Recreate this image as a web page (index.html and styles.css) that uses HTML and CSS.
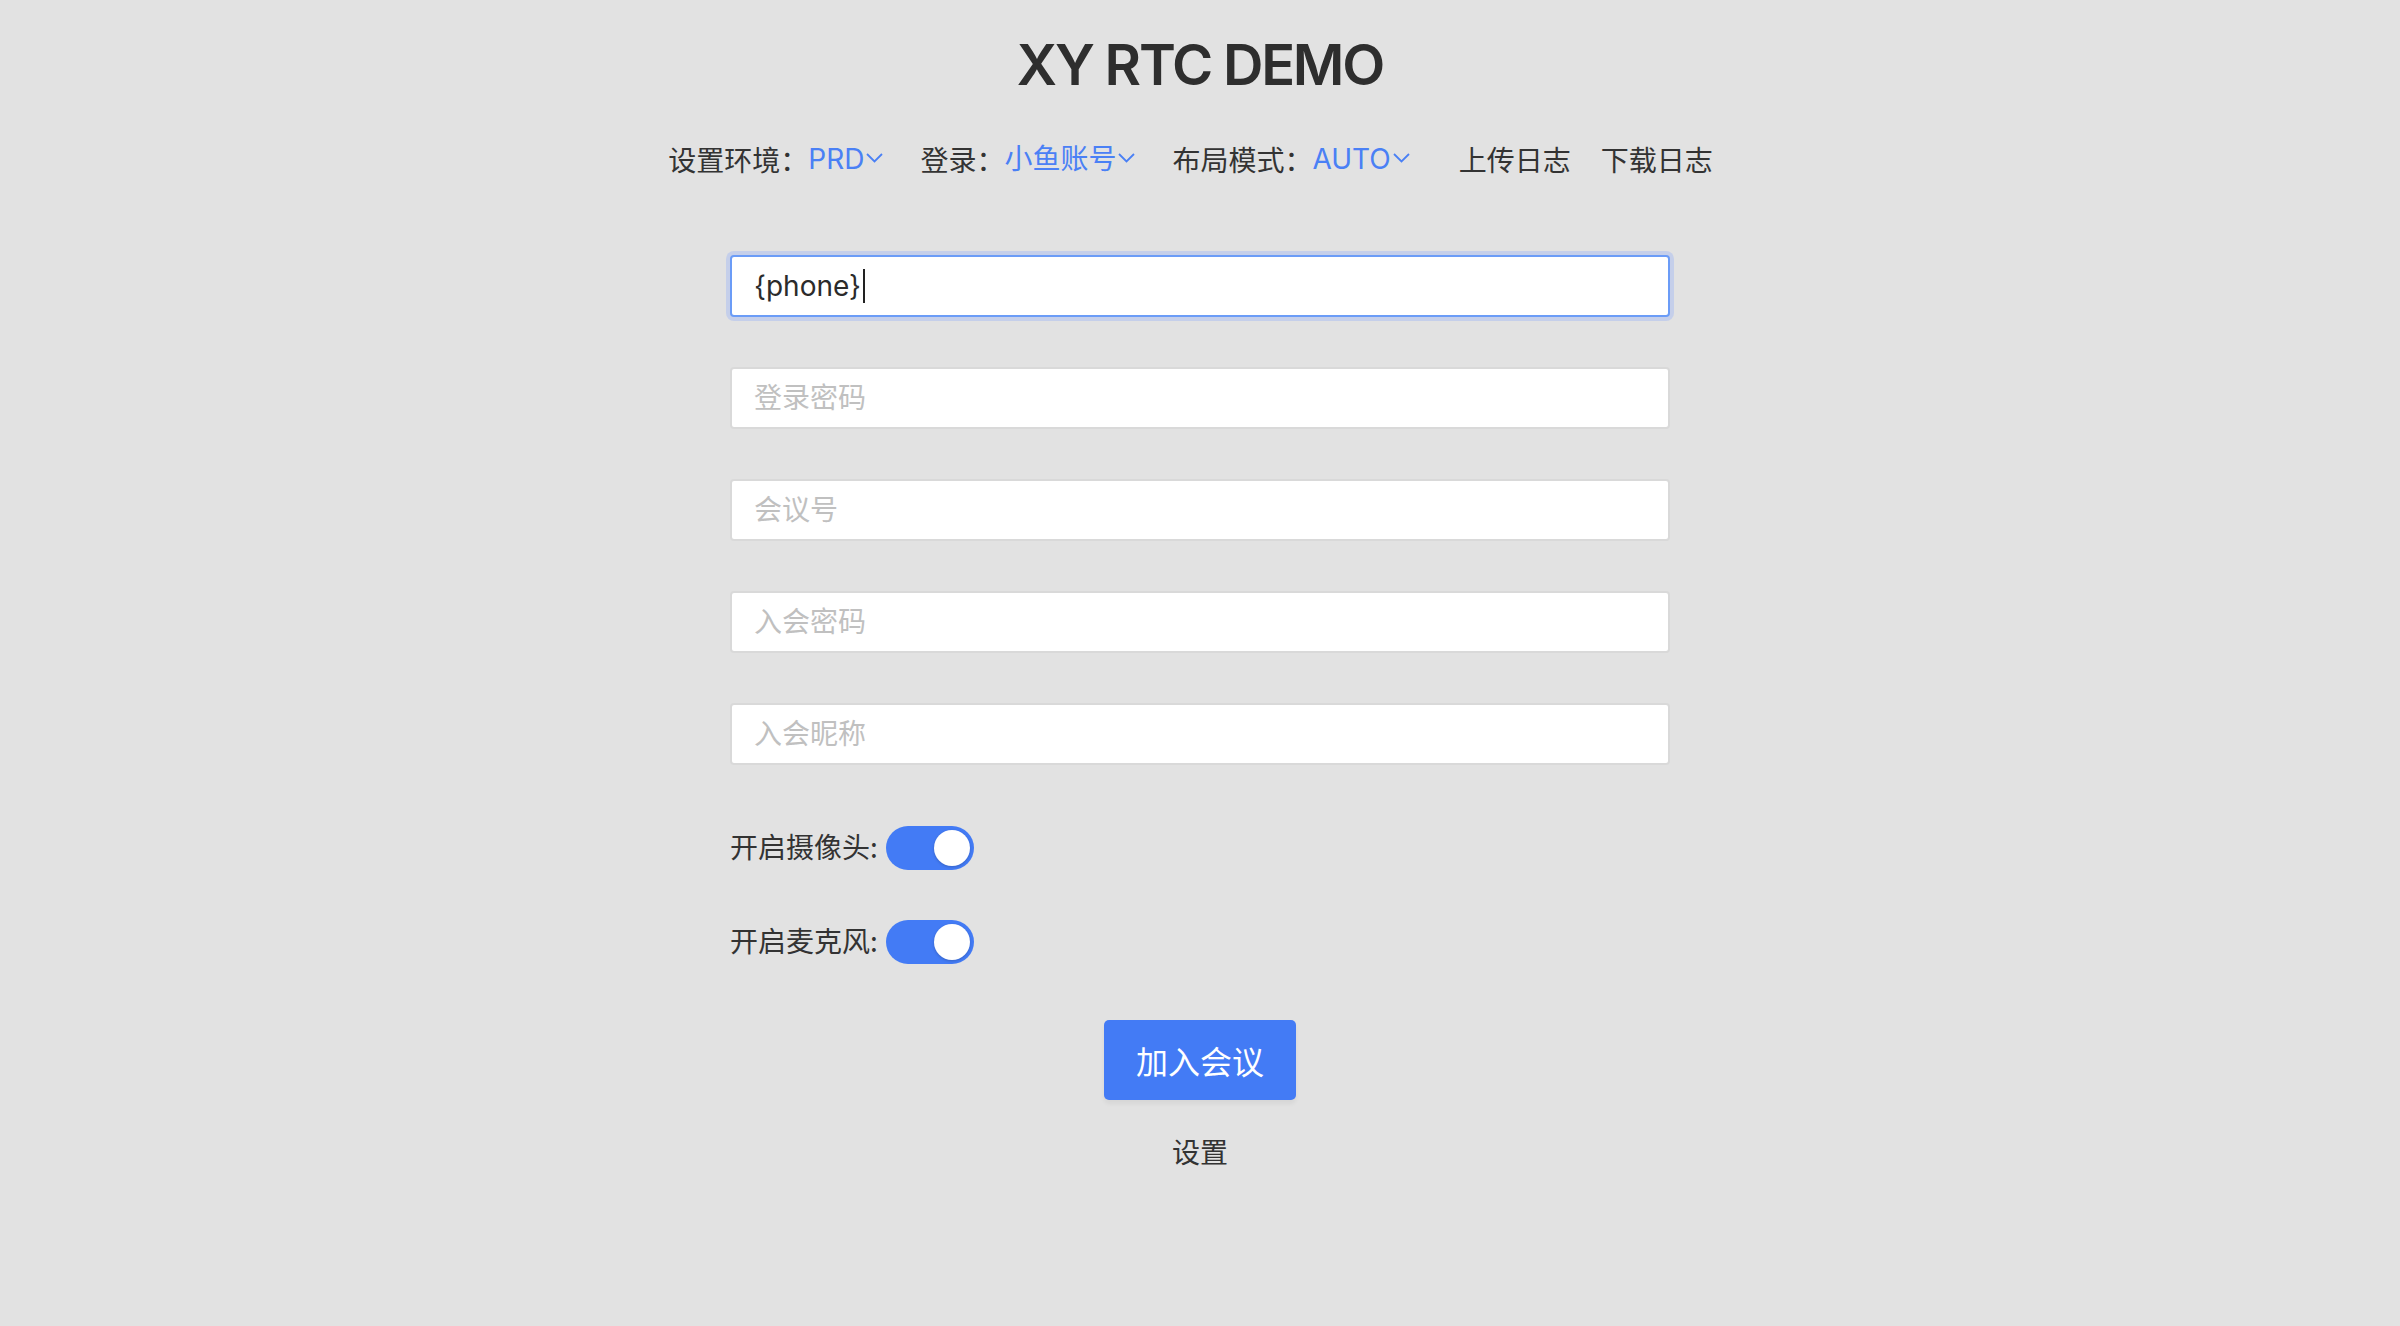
FILE: index.html
```html
<!DOCTYPE html>
<html lang="zh-CN">
<head>
<meta charset="utf-8">
<title>XY RTC DEMO</title>
<link rel="stylesheet" href="styles.css">
</head>
<body>
<div class="page">
  <h1 class="title">XY RTC DEMO</h1>
  <nav class="nav">
    <div class="nav-item">
      <span class="nav-label">设置环境：</span>
      <span class="nav-value">PRD<svg class="chev" width="17" height="10" viewBox="0 0 17 10"><polyline points="1,1 8.5,8.5 16,1" fill="none" stroke="currentColor" stroke-width="1.8"/></svg></span>
    </div>
    <div class="nav-item">
      <span class="nav-label">登录：</span>
      <span class="nav-value">小鱼账号<svg class="chev" width="17" height="10" viewBox="0 0 17 10"><polyline points="1,1 8.5,8.5 16,1" fill="none" stroke="currentColor" stroke-width="1.8"/></svg></span>
    </div>
    <div class="nav-item">
      <span class="nav-label">布局模式：</span>
      <span class="nav-value">AUTO<svg class="chev" width="17" height="10" viewBox="0 0 17 10"><polyline points="1,1 8.5,8.5 16,1" fill="none" stroke="currentColor" stroke-width="1.8"/></svg></span>
    </div>
    <span class="nav-link upload">上传日志</span>
    <span class="nav-link download">下载日志</span>
  </nav>

  <form class="form">
    <div class="field focused"><span class="field-text">{phone}</span><span class="caret"></span></div>
    <input class="field" type="password" placeholder="登录密码">
    <input class="field" type="text" placeholder="会议号">
    <input class="field" type="password" placeholder="入会密码">
    <input class="field field-last" type="text" placeholder="入会昵称">

    <div class="switch-row">
      <span class="switch-label">开启摄像头:</span>
      <span class="switch on"><span class="knob"></span></span>
    </div>
    <div class="switch-row">
      <span class="switch-label">开启麦克风:</span>
      <span class="switch on"><span class="knob"></span></span>
    </div>

    <button type="button" class="join">加入会议</button>
    <span class="settings">设置</span>
  </form>
</div>
</body>
</html>
```

FILE: styles.css
```css
html, body {
  margin: 0;
  padding: 0;
  background: #e2e2e2;
}
body {
  font-family: Inter, "Noto Sans CJK SC", sans-serif;
  color: #333333;
  min-height: 1326px;
}
.page {
  display: flex;
  flex-direction: column;
  align-items: center;
  padding-top: 37px;
}
.title {
  margin: 0;
  font-family: Inter, "Noto Sans CJK SC", sans-serif;
  font-weight: 600;
  font-size: 56px;
  line-height: 56px;
  letter-spacing: -2.2px;
  color: #2e2e2e;
}
.nav {
  display: flex;
  align-items: center;
  margin-top: 46px;
  height: 40px;
  font-size: 28px;
  line-height: 40px;
  padding-right: 19px;
}
.nav-item {
  display: flex;
  align-items: center;
  margin-right: 37px;
}
.nav-label {
  font-family: "Noto Sans CJK SC", sans-serif;
  color: #333333;
}
.nav-value {
  display: flex;
  align-items: center;
  color: #4a80f5;
  font-family: Inter, "Noto Sans CJK SC", sans-serif;
}
.chev {
  margin-left: 2px;
  margin-top: -2px;
}
.nav-link {
  font-family: "Noto Sans CJK SC", sans-serif;
  color: #333333;
}
.upload {
  margin-left: 12px;
}
.download {
  margin-left: 30px;
}
.form {
  display: flex;
  flex-direction: column;
  width: 940px;
  margin-top: 76px;
}
.field {
  box-sizing: border-box;
  width: 940px;
  height: 62px;
  margin: 0 0 50px 0;
  padding: 0 22px;
  border: 2px solid #d9d9d9;
  border-radius: 4px;
  background: #ffffff;
  font-family: Inter, "Noto Sans CJK SC", sans-serif;
  font-size: 28px;
  color: #333333;
  outline: none;
  display: flex;
  align-items: center;
}
.field::placeholder {
  color: #c0c0c0;
  font-family: "Noto Sans CJK SC", sans-serif;
}
.field.focused {
  border-color: #6b9cf7;
  box-shadow: 0 0 0 4px #c5cfea;
}
.field-text {
  color: #2b2b2b;
}
.caret {
  display: inline-block;
  width: 2px;
  height: 34px;
  background: #222222;
  margin-left: 2px;
}
.field-last {
  margin-bottom: 61px;
}
.switch-row {
  display: flex;
  align-items: center;
  height: 44px;
  margin-bottom: 50px;
}
.switch-label {
  font-family: "Noto Sans CJK SC", sans-serif;
  font-size: 28px;
  line-height: 40px;
  color: #333333;
  margin-right: 8px;
  margin-top: -4px;
}
.switch {
  position: relative;
  box-sizing: border-box;
  width: 88px;
  height: 44px;
  border-radius: 22px;
  background: #437bf5;
  display: flex;
  align-items: center;
  justify-content: flex-end;
  padding: 0 4px;
}
.knob {
  width: 36px;
  height: 36px;
  border-radius: 50%;
  background: #ffffff;
  box-shadow: 0 1px 3px rgba(0, 0, 0, 0.2);
}
.join {
  align-self: center;
  width: 192px;
  height: 80px;
  margin-top: 6px;
  border: none;
  border-radius: 5px;
  background: #437bf5;
  color: #ffffff;
  font-family: "Noto Sans CJK SC", sans-serif;
  font-size: 32px;
  box-shadow: 0 4px 4px rgba(0, 0, 0, 0.05);
  cursor: pointer;
}
.settings {
  align-self: center;
  margin-top: 31px;
  font-family: "Noto Sans CJK SC", sans-serif;
  font-size: 28px;
  line-height: 40px;
  color: #333333;
}
```
